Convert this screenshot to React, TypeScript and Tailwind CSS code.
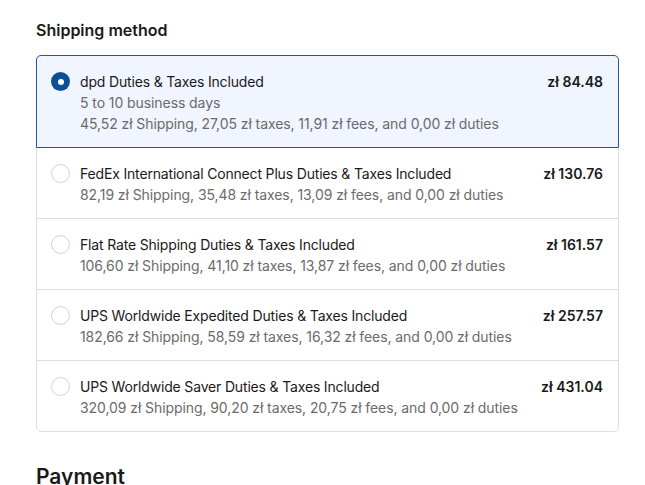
import React from "react";

const options = [
  {
    title: "dpd Duties & Taxes Included",
    sub: "5 to 10 business days",
    detail: "45,52 zł Shipping, 27,05 zł taxes, 11,91 zł fees, and 0,00 zł duties",
    price: "zł 84.48",
    selected: true,
  },
  {
    title: "FedEx International Connect Plus Duties & Taxes Included",
    detail: "82,19 zł Shipping, 35,48 zł taxes, 13,09 zł fees, and 0,00 zł duties",
    price: "zł 130.76",
  },
  {
    title: "Flat Rate Shipping Duties & Taxes Included",
    detail: "106,60 zł Shipping, 41,10 zł taxes, 13,87 zł fees, and 0,00 zł duties",
    price: "zł 161.57",
  },
  {
    title: "UPS Worldwide Expedited Duties & Taxes Included",
    detail: "182,66 zł Shipping, 58,59 zł taxes, 16,32 zł fees, and 0,00 zł duties",
    price: "zł 257.57",
  },
  {
    title: "UPS Worldwide Saver Duties & Taxes Included",
    detail: "320,09 zł Shipping, 90,20 zł taxes, 20,75 zł fees, and 0,00 zł duties",
    price: "zł 431.04",
  },
];

export default function App() {
  return (
    <div
      className="bg-white w-[645px] h-[485px] overflow-hidden pl-[36px] pr-[26px] pt-[20px]"
      style={{ fontFamily: "Inter, 'Noto Sans', sans-serif" }}
    >
      <h2 className="text-[16px] leading-[21px] font-semibold text-[#1a1a1a] mb-[14px]">Shipping method</h2>
      <div className="border border-[#dedede] rounded-[5px]">
        {options.map((o, i) => (
          <div
            key={i}
            className={
              o.selected
                ? "flex items-start gap-[10px] pl-[14px] pr-[15px] pt-[15px] pb-[13px] bg-[#f0f5ff] border border-[#1f5aa0] rounded-t-[5px] -m-px mb-0"
                : i === 1
                ? "flex items-start gap-[10px] pl-[14px] pr-[15px] pt-[15px] pb-[13px]"
                : "flex items-start gap-[10px] pl-[14px] pr-[15px] pt-[15px] pb-[13px] border-t border-[#dedede]"
            }
          >
            <div className="pt-[1px] shrink-0">
              {o.selected ? (
                <div className="w-[19px] h-[19px] rounded-full bg-[#0b4f95] flex items-center justify-center">
                  <div className="w-[6px] h-[6px] rounded-full bg-white" />
                </div>
              ) : (
                <div className="w-[19px] h-[19px] rounded-full border border-[#d4d4d4] bg-white" />
              )}
            </div>
            <div className="flex-1 text-[14px] leading-[21px]">
              <div className="text-[#1a1a1a] tracking-[-0.17px]">{o.title}</div>
              {o.sub && <div className="text-[#6b6b6b] tracking-[-0.08px]">{o.sub}</div>}
              <div className="text-[#6b6b6b] tracking-[-0.08px]">{o.detail}</div>
            </div>
            <div className="text-[14px] leading-[21px] font-semibold text-[#1a1a1a] shrink-0">{o.price}</div>
          </div>
        ))}
      </div>
      <h2 className="mt-[31px] text-[21px] leading-[28px] font-semibold text-[#1a1a1a]">Payment</h2>
    </div>
  );
}
